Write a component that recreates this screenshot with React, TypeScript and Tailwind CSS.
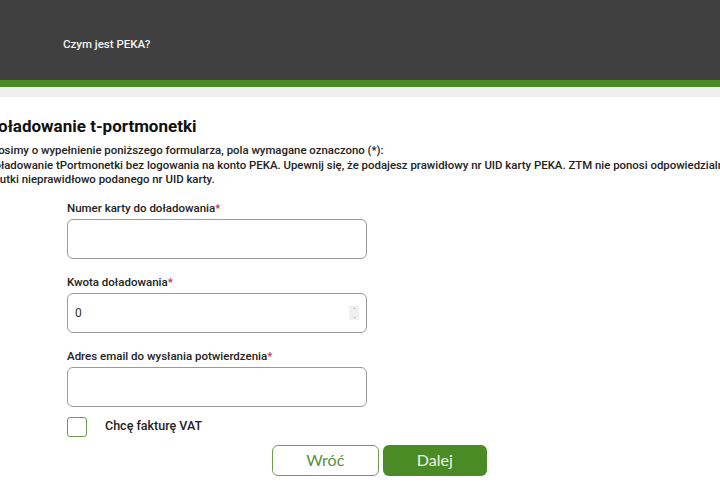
import { useState } from 'react'

const Label = ({ children }: { children: string }) => (
  <label className="mb-[3px] block text-[11.5px] font-medium leading-[15px] text-[#222]">
    {children}
    <span className="text-[#c0344d]">*</span>
  </label>
)

export default function App() {
  const [amount, setAmount] = useState('0')
  const [vat, setVat] = useState(false)

  return (
    <div className="h-[500px] w-[720px] overflow-hidden bg-white font-['Roboto',sans-serif]">
      <header className="h-[80px] bg-[#404040]">
        <div className="pl-[63px] pt-[31px]">
          <span className="text-[11.5px] font-medium leading-[16px] text-[#f2f2f2]">Czym jest PEKA?</span>
        </div>
      </header>
      <div className="h-[7px] bg-[#4b8b27]" />
      <div className="h-[10px] bg-[#efefef]" />

      <main className="-ml-[13px] whitespace-nowrap pt-[18px]">
        <h1 className="text-[17px] font-bold leading-[22px] text-[#111]">Doładowanie t-portmonetki</h1>

        <div className="mt-[6px] text-[11.4px] font-medium leading-[14.5px] text-[#222]">
          <p>Prosimy o wypełnienie poniższego formularza, pola wymagane oznaczono (*):</p>
          <p>
            Doładowanie tPortmonetki bez logowania na konto PEKA. Upewnij się, że podajesz prawidłowy nr UID karty
            PEKA. ZTM nie ponosi odpowiedzialności za
          </p>
          <p>Skutki nieprawidłowo podanego nr UID karty.</p>
        </div>

        <form className="ml-[80px] mt-[14px] w-[420px]" onSubmit={(e) => e.preventDefault()}>
          <div>
            <Label>Numer karty do doładowania</Label>
            <input className="h-[40px] w-[300px] rounded-[6px] border border-[#9a9a9a] px-[8px] text-[12px] outline-none" />
          </div>

          <div className="mt-[16px]">
            <Label>Kwota doładowania</Label>
            <div className="relative h-[40px] w-[300px]">
              <input
                value={amount}
                onChange={(e) => setAmount(e.target.value)}
                className="h-full w-full rounded-[6px] border border-[#9a9a9a] px-[7px] text-[12px] text-[#333] outline-none"
              />
              <span className="absolute right-[8px] top-[13px] flex h-[14px] w-[10px] flex-col items-center justify-center bg-[#f0f0f0] text-[6px] leading-[6px] text-[#aaa]">
                <span>⌃</span>
                <span className="rotate-180">⌃</span>
              </span>
            </div>
          </div>

          <div className="mt-[16px]">
            <Label>Adres email do wysłania potwierdzenia</Label>
            <input className="h-[40px] w-[300px] rounded-[6px] border border-[#9a9a9a] px-[8px] text-[12px] outline-none" />
          </div>

          <label className="mt-[10px] flex items-center">
            <button
              type="button"
              onClick={() => setVat(!vat)}
              className="h-[20px] w-[20px] rounded-[3px] border border-[#6e9d4f] bg-white"
            />
            <span className="ml-[18px] text-[12.5px] font-medium text-[#222]">Chcę fakturę VAT</span>
          </label>

          <div className="mt-[8px] flex gap-[4px] pl-[205px] font-['Lato',sans-serif]">
            <button
              type="button"
              className="h-[31px] w-[107px] rounded-[6px] border border-[#6f9c4f] bg-white text-[16px] text-[#5a8f3a]"
            >
              Wróć
            </button>
            <button type="submit" className="h-[31px] w-[105px] rounded-[6px] bg-[#4b8b25] text-[16px] text-[#eef5e8]">
              Dalej
            </button>
          </div>
        </form>
      </main>
    </div>
  )
}
